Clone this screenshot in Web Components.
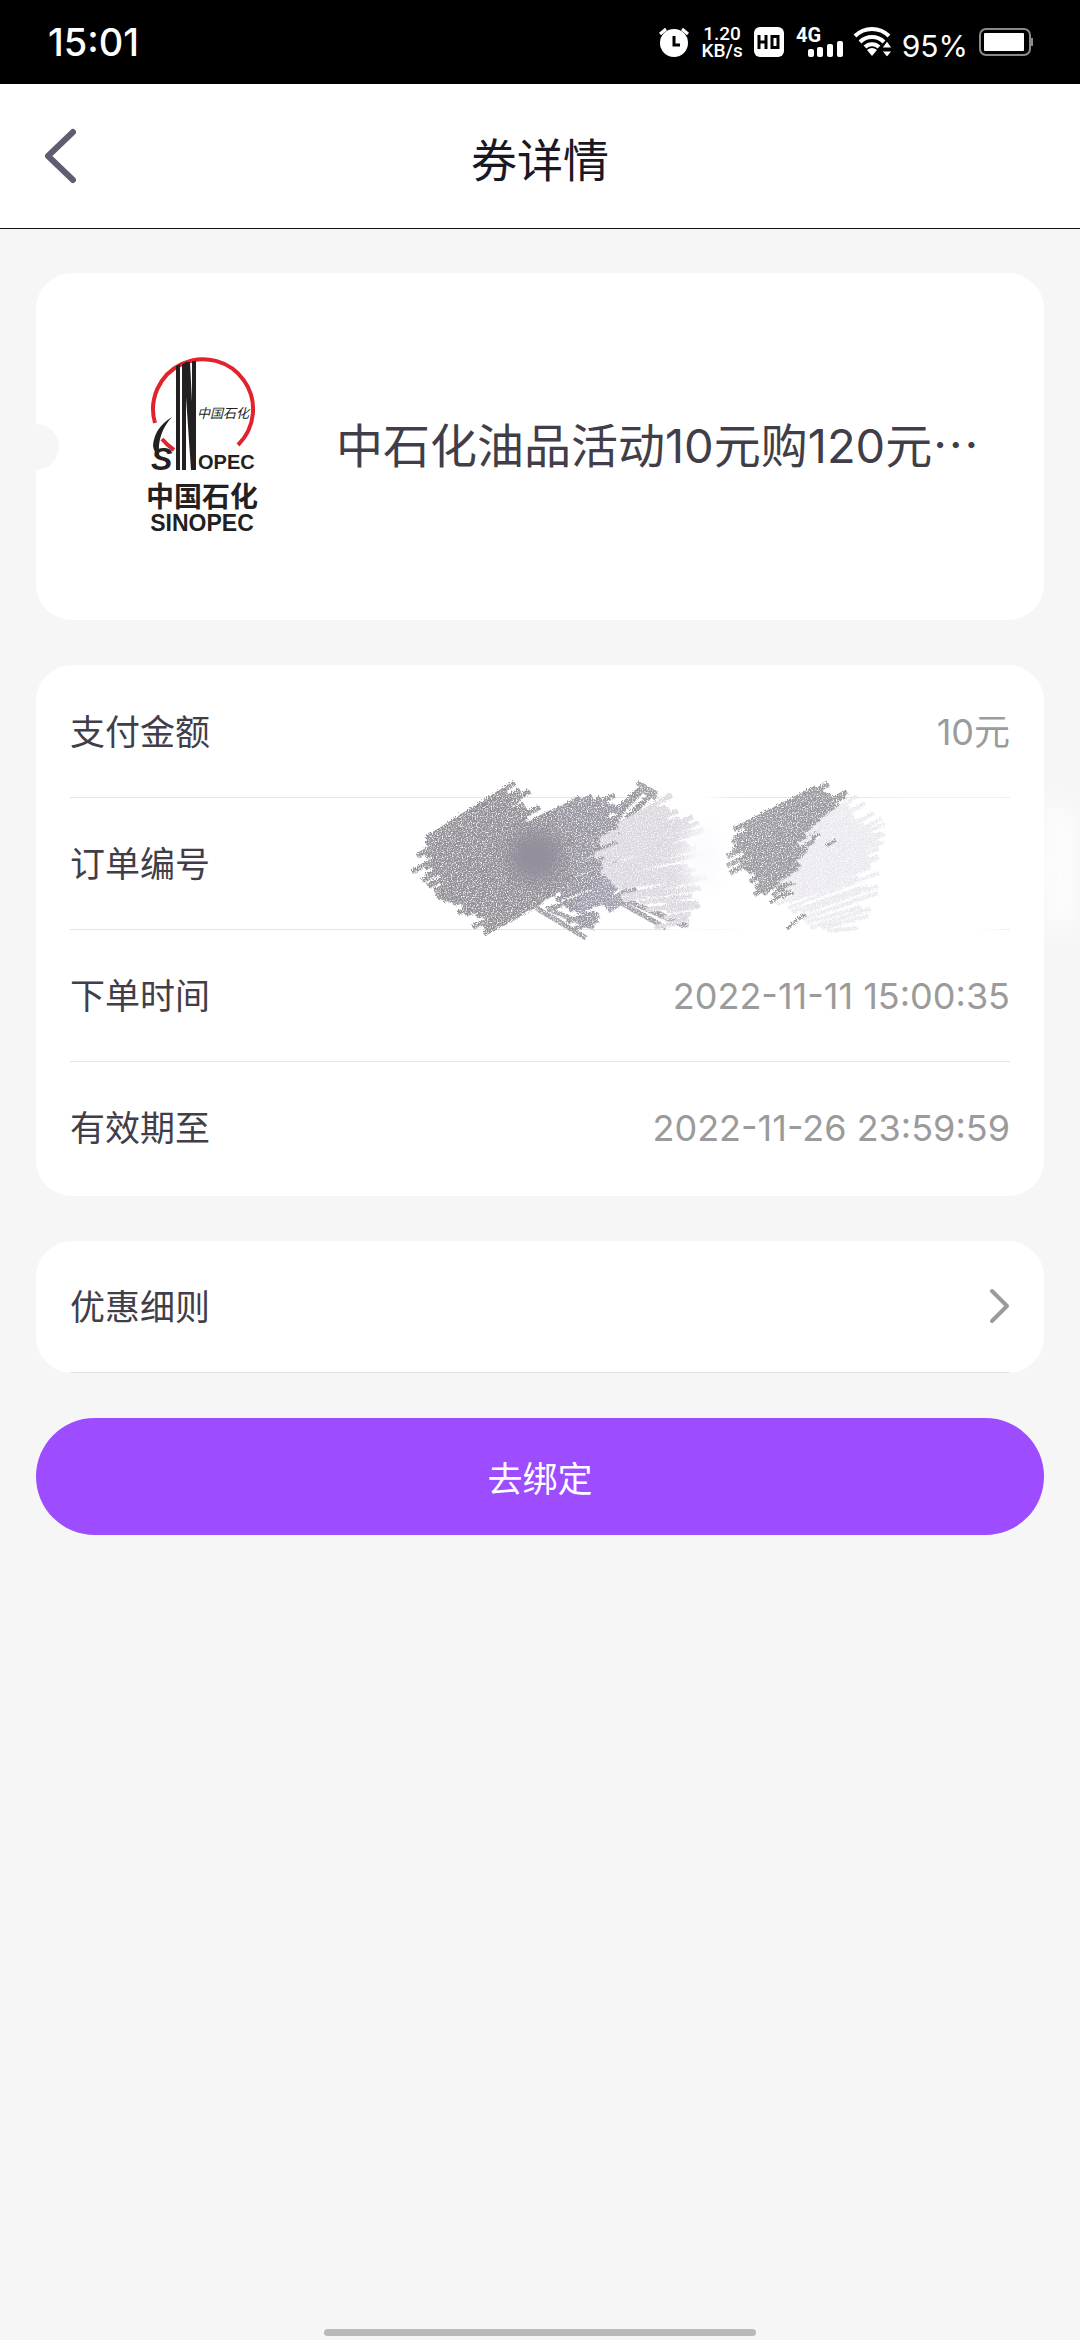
<!DOCTYPE html>
<html lang="zh-CN">

<head>
  <meta charset="UTF-8">
  <meta name="viewport" content="width=device-width, initial-scale=1.0">
  <title>券详情</title>
  <style>
    body {
      margin: 0;
      background: #f6f6f6;
      color: #413e49;
      font-family: Inter, "Noto Sans CJK SC", sans-serif;
      font-size: 35px;
      line-height: 48px;
    }
  </style>
</head>

<body>
  <coupon-page>
    <status-bar slot="top" time="15:01" battery="95%"></status-bar>
    <nav-header slot="top">券详情</nav-header>
    <coupon-card>中石化油品活动10元购120元</coupon-card>
    <info-card>
      <info-row label="支付金额">10元</info-row>
      <info-row label="订单编号"><scribble-mask></scribble-mask></info-row>
      <info-row label="下单时间">2022-11-11 15:00:35</info-row>
      <info-row label="有效期至">2022-11-26 23:59:59</info-row>
    </info-card>
    <link-row>优惠细则</link-row>
    <action-button>去绑定</action-button>
  </coupon-page>

  <script>
    class BaseElement extends HTMLElement {
      constructor() {
        super();
        this.attachShadow({ mode: "open" });
      }

      connectedCallback() {
        this.shadowRoot.innerHTML = this.render();
      }
    }

    class CouponPage extends BaseElement {
      render() {
        return `
          <style>
            :host {
              display: flex;
              flex-direction: column;
              min-height: 100vh;
              overflow-x: hidden;
            }
            main {
              flex: 1;
              display: flex;
              flex-direction: column;
              gap: 45px;
              padding: 44px 36px;
            }
            footer {
              display: flex;
              justify-content: center;
              padding-bottom: 4px;
            }
            .home {
              width: 40%;
              height: 7px;
              border-radius: 4px;
              background: #b9b9b9;
            }
          </style>
          <slot name="top"></slot>
          <main><slot></slot></main>
          <footer><div class="home"></div></footer>
        `;
      }
    }

    class StatusBar extends BaseElement {
      render() {
        return `
          <style>
            :host {
              display: flex;
              align-items: center;
              justify-content: space-between;
              height: 84px;
              padding: 0 47px 0 48px;
              background: #000;
              color: #fff;
            }
            .time {
              font-size: 38px;
              font-weight: 500;
            }
            .icons {
              display: flex;
              align-items: center;
              gap: 11px;
            }
            .speed {
              display: flex;
              flex-direction: column;
              align-items: center;
              font-family: Roboto, sans-serif;
              font-size: 19px;
              font-weight: 500;
              line-height: 17px;
            }
            .battery {
              font-size: 30px;
              padding-top: 8px;
            }
            svg {
              display: block;
              overflow: visible;
            }
          </style>
          <span class="time">${this.getAttribute("time")}</span>
          <div class="icons">
            <svg width="32" height="32" viewBox="0 0 32 32" fill="none">
              <circle cx="16" cy="17" r="14" fill="#fff"/>
              <path d="M2 8l6-5M30 8l-6-5" stroke="#fff" stroke-width="3"/>
              <path d="M16 10v9h6" stroke="#000" stroke-width="3"/>
            </svg>
            <div class="speed"><span>1.20</span><span>KB/s</span></div>
            <svg width="30" height="30" viewBox="0 0 30 30">
              <rect width="30" height="30" rx="6" fill="#fff"/>
              <path d="M5 8v14M12 8v14M5 15h7M18 9.500h6v11h-6z" fill="none" stroke="#000" stroke-width="3"/>
            </svg>
            <svg width="48" height="32" viewBox="0 0 48 32" fill="#fff">
              <text x="1" y="16" font-size="20" font-weight="700" font-family="Roboto, sans-serif">4G</text>
              <rect x="13" y="23" width="6" height="8" rx="2"/>
              <rect x="22" y="21" width="6" height="10" rx="2"/>
              <rect x="32" y="18" width="6" height="13" rx="2"/>
              <rect x="42" y="15" width="6" height="16" rx="2"/>
            </svg>
            <svg width="37" height="30" viewBox="0 0 37 30">
              <g fill="none" stroke="#fff" stroke-width="4">
                <path d="M1 9a24 24 0 0 1 34 0"/>
                <path d="M6 15a17 17 0 0 1 24 0"/>
                <path d="M11 20a10 10 0 0 1 14 0"/>
              </g>
              <path d="M13 23q5-4 10 0l-5 6z" fill="#fff"/>
              <path d="M33 14l5 7h-10zM33 30l5-6h-10z" fill="#fff" stroke="#000" stroke-width="1"/>
            </svg>
            <span class="battery">${this.getAttribute("battery")}</span>
            <svg width="54" height="28" viewBox="0 0 54 28">
              <rect x="1" y="1" width="50" height="26" rx="6" fill="none" stroke="#8a8a8a" stroke-width="2"/>
              <rect x="5" y="5" width="40" height="18" rx="1" fill="#fff"/>
              <path d="M53 10v8" stroke="#8a8a8a" stroke-width="2"/>
            </svg>
          </div>
        `;
      }
    }

    class NavHeader extends BaseElement {
      render() {
        return `
          <style>
            :host {
              display: grid;
              grid-template-columns: 120px 1fr 120px;
              align-items: center;
              height: 144px;
              background: #fff;
              border-bottom: 1px solid #111;
            }
            button {
              justify-self: start;
              display: flex;
              padding: 0 44px;
              border: none;
              background: none;
              cursor: pointer;
            }
            h1 {
              margin: 0;
              padding-top: 8px;
              color: #1a1823;
              font-size: 46px;
              font-weight: 400;
              line-height: 60px;
              text-align: center;
            }
          </style>
          <button type="button" aria-label="返回">
            <svg width="32" height="56" viewBox="0 0 32 56" fill="none" stroke="#625c70" stroke-width="6" stroke-linecap="round" stroke-linejoin="round">
              <path d="M29 4L4 28l25 24"/>
            </svg>
          </button>
          <h1><slot></slot></h1>
        `;
      }
    }

    class SinopecLogo extends BaseElement {
      render() {
        return `
          <style>
            :host {
              display: flex;
              flex-direction: column;
              align-items: center;
              width: 118px;
              color: #241f20;
            }
            svg {
              display: block;
              margin-bottom: 8px;
              overflow: visible;
            }
            .cn {
              font-family: "Noto Sans CJK SC", sans-serif;
              font-size: 28px;
              font-weight: 700;
              line-height: 30px;
            }
            .en {
              font-family: "Liberation Sans", sans-serif;
              font-size: 23px;
              font-weight: 700;
              line-height: 26px;
            }
          </style>
          <svg width="118" height="115" viewBox="0 0 118 115" fill="#241f20">
            <path d="M12 66A50 50 0 1 1 95 88" fill="none" stroke="#e0232d" stroke-width="4"/>
            <path d="M19 82Q24 88 31 93" fill="none" stroke="#e0232d" stroke-width="4"/>
            <path d="M33 9l4-2v106h-4zM39 7l3-1v107h-3zM43 5h4l2 40V4h4v109h-5L43 40v73h-1V5z"/>
            <path d="M29 60Q11 71 10 89Q11 96 16 99Q14 76 29 60z"/>
            <text x="8" y="113" font-family="Liberation Sans, sans-serif" font-size="32" font-weight="700" font-style="italic">S</text>
            <text x="55" y="112" font-family="Liberation Sans, sans-serif" font-size="20" font-weight="700">OPEC</text>
            <text x="54" y="61" font-family="Noto Sans CJK SC, sans-serif" font-size="13" font-style="italic">中国石化</text>
          </svg>
          <span class="cn">中国石化</span>
          <span class="en">SINOPEC</span>
        `;
      }
    }

    class CouponCard extends BaseElement {
      render() {
        return `
          <style>
            :host {
              position: relative;
              display: flex;
              align-items: center;
              gap: 75px;
              min-height: 347px;
              padding: 0 60px 0 107px;
              box-sizing: border-box;
              border-radius: 36px;
              background: #fff;
              overflow: hidden;
            }
            /* ticket notch */
            :host::before {
              content: "";
              position: absolute;
              left: -23px;
              top: calc(50% - 23px);
              width: 46px;
              height: 46px;
              border-radius: 50%;
              background: #f6f6f6;
            }
            sinopec-logo {
              flex: none;
            }
            h2 {
              margin: 0;
              padding-bottom: 4px;
              font-size: 47px;
              font-weight: 400;
              line-height: 60px;
              white-space: nowrap;
            }
            .more {
              font-family: "Noto Sans CJK SC", sans-serif;
            }
          </style>
          <sinopec-logo></sinopec-logo>
          <h2><slot></slot><span class="more">…</span></h2>
        `;
      }
    }

    class InfoCard extends BaseElement {
      render() {
        return `
          <style>
            :host {
              display: flex;
              flex-direction: column;
              padding: 1px 34px 2px;
              border-radius: 36px;
              background: #fff;
            }
            ::slotted(:not(:last-child)) {
              border-bottom: 1px solid #e6e6e8;
            }
          </style>
          <slot></slot>
        `;
      }
    }

    class InfoRow extends BaseElement {
      render() {
        return `
          <style>
            :host {
              position: relative;
              display: flex;
              align-items: center;
              justify-content: space-between;
              height: 132px;
              box-sizing: border-box;
            }
            .value {
              color: #9b9b9b;
              font-size: 36px;
            }
          </style>
          <span>${this.getAttribute("label")}</span>
          <span class="value"><slot></slot></span>
        `;
      }
    }

    class ScribbleMask extends BaseElement {
      // point at t (0..1) on a polyline
      along(points, t) {
        const pos = t * (points.length - 1);
        const i = Math.min(Math.floor(pos), points.length - 2);
        const f = pos - i;
        return [
          points[i][0] + (points[i + 1][0] - points[i][0]) * f,
          points[i][1] + (points[i + 1][1] - points[i][1]) * f
        ];
      }

      random() {
        this.seed = (this.seed * 16807) % 2147483647;
        return this.seed / 2147483647;
      }

      hatch(starts, ends, count, color, width) {
        let d = "";
        for (let i = 0; i < count; i++) {
          const a = this.along(starts, i / (count - 1));
          const b = this.along(ends, i / (count - 1));
          const j = this.random() * 24 - 6;
          const k = this.random() * 24 - 6;
          d += `M${Math.round(a[0] + j)} ${Math.round(a[1] - j / 2)}L${Math.round(b[0] - k)} ${Math.round(b[1] + k / 2)}`;
        }
        return `<path d="${d}" stroke="${color}" stroke-width="${width}"/>`;
      }

      render() {
        this.seed = 77;
        return `
          <style>
            :host {
              position: absolute;
              top: -38px;
              right: -70px;
              pointer-events: none;
            }
            svg {
              display: block;
            }
          </style>
          <svg width="690" height="200" viewBox="0 0 690 200" fill="none" aria-hidden="true">
            <filter id="grain" x="-5%" y="-5%" width="110%" height="110%" color-interpolation-filters="sRGB">
              <feTurbulence type="fractalNoise" baseFrequency="0.8" numOctaves="2" seed="4" result="noise"/>
              <feDisplacementMap in="SourceGraphic" in2="noise" scale="5" result="rough"/>
              <feColorMatrix in="noise" values="0 0 0 0 0  0 0 0 0 0  0 0 0 0 0  0 0 0 3 -0.6" result="specks"/>
              <feComposite in="rough" in2="specks" operator="in"/>
            </filter>
            <filter id="soft" x="-40%" y="-40%" width="180%" height="180%"><feGaussianBlur stdDeviation="9"/></filter>
            <g fill="#fff">
              <ellipse cx="300" cy="100" rx="48" ry="80" filter="url(#soft)"/>
              <ellipse cx="470" cy="170" rx="150" ry="26" filter="url(#soft)"/>
              <ellipse cx="560" cy="38" rx="90" ry="8" opacity="0.7" filter="url(#soft)"/>
              <path d="M654 38L690 55V160L660 175L648 120z" opacity="0.6" filter="url(#soft)"/>
            </g>
            <g filter="url(#grain)">
              ${this.hatch([[230, 50], [236, 60]], [[248, 29], [266, 36]], 5, "#99979d", 5)}
              <path d="M247 23l20 11M252 30l14 8M146 148l50 30M160 150l44 18M226 140l50 28M236 140l58 26M250 146l48 20" stroke="#a3a0a8" stroke-width="5"/>
              ${this.hatch([[140, 65], [150, 85], [160, 110], [160, 140], [175, 174]], [[208, 29], [235, 42], [244, 70], [240, 110], [216, 156]], 31, "#9a97a2", 5)}
              ${this.hatch([[34, 80], [24, 106], [37, 122], [55, 136], [68, 152], [86, 178]], [[128, 22], [138, 42], [165, 60], [184, 85], [182, 118], [152, 142]], 42, "#959198", 5)}
              <path d="M208 142l24-26M190 150l34-34M216 148l30-20" stroke="#a09fae" stroke-width="12"/>
              ${this.hatch([[216, 72], [208, 95], [214, 115], [240, 138], [268, 166]], [[280, 36], [304, 60], [316, 90], [312, 125], [304, 156]], 32, "#dcd7df", 5)}
              ${this.hatch([[345, 70], [334, 95], [346, 112], [364, 126], [380, 144]], [[430, 26], [458, 34], [432, 65], [424, 90], [420, 110]], 32, "#9b9aa0", 5)}
              ${this.hatch([[418, 68], [408, 98], [395, 122], [386, 146], [424, 178]], [[464, 38], [486, 56], [494, 80], [484, 108], [484, 160]], 34, "#ebe9ef", 4)}
              <path d="M397 169l14-12 5-2M380 143l12-8 12-2M422 78l8-4M436 86l10-6" stroke="#99989e" stroke-width="3"/>
            </g>
            <ellipse cx="145" cy="96" rx="28" ry="26" fill="#948e9b" filter="url(#soft)"/>
            <ellipse cx="314" cy="98" rx="18" ry="34" fill="#fbfbfe" filter="url(#soft)"/>
          </svg>
        `;
      }
    }

    class LinkRow extends BaseElement {
      render() {
        return `
          <style>
            :host {
              display: block;
            }
            button {
              display: flex;
              width: 100%;
              padding: 0 34px;
              border: none;
              border-radius: 36px;
              background: #fff;
              color: inherit;
              font: inherit;
              cursor: pointer;
            }
            .line {
              flex: 1;
              display: flex;
              align-items: center;
              justify-content: space-between;
              height: 131px;
              border-bottom: 1px solid #e3e3e5;
            }
          </style>
          <button type="button">
            <span class="line">
              <slot></slot>
              <svg width="22" height="38" viewBox="0 0 22 38" fill="none" stroke="#9b9b9b" stroke-width="4" stroke-linecap="round" stroke-linejoin="round">
                <path d="M4 3l15 15L4 33"/>
              </svg>
            </span>
          </button>
        `;
      }
    }

    class ActionButton extends BaseElement {
      render() {
        return `
          <style>
            :host {
              display: block;
            }
            button {
              display: block;
              width: 100%;
              height: 117px;
              padding: 4px 0 0;
              border: none;
              border-radius: 59px;
              background: #9d4cff;
              color: #fff;
              font: inherit;
              cursor: pointer;
            }
          </style>
          <button type="button"><slot></slot></button>
        `;
      }
    }

    customElements.define("coupon-page", CouponPage);
    customElements.define("status-bar", StatusBar);
    customElements.define("nav-header", NavHeader);
    customElements.define("sinopec-logo", SinopecLogo);
    customElements.define("coupon-card", CouponCard);
    customElements.define("info-card", InfoCard);
    customElements.define("info-row", InfoRow);
    customElements.define("scribble-mask", ScribbleMask);
    customElements.define("link-row", LinkRow);
    customElements.define("action-button", ActionButton);
  </script>
</body>

</html>
